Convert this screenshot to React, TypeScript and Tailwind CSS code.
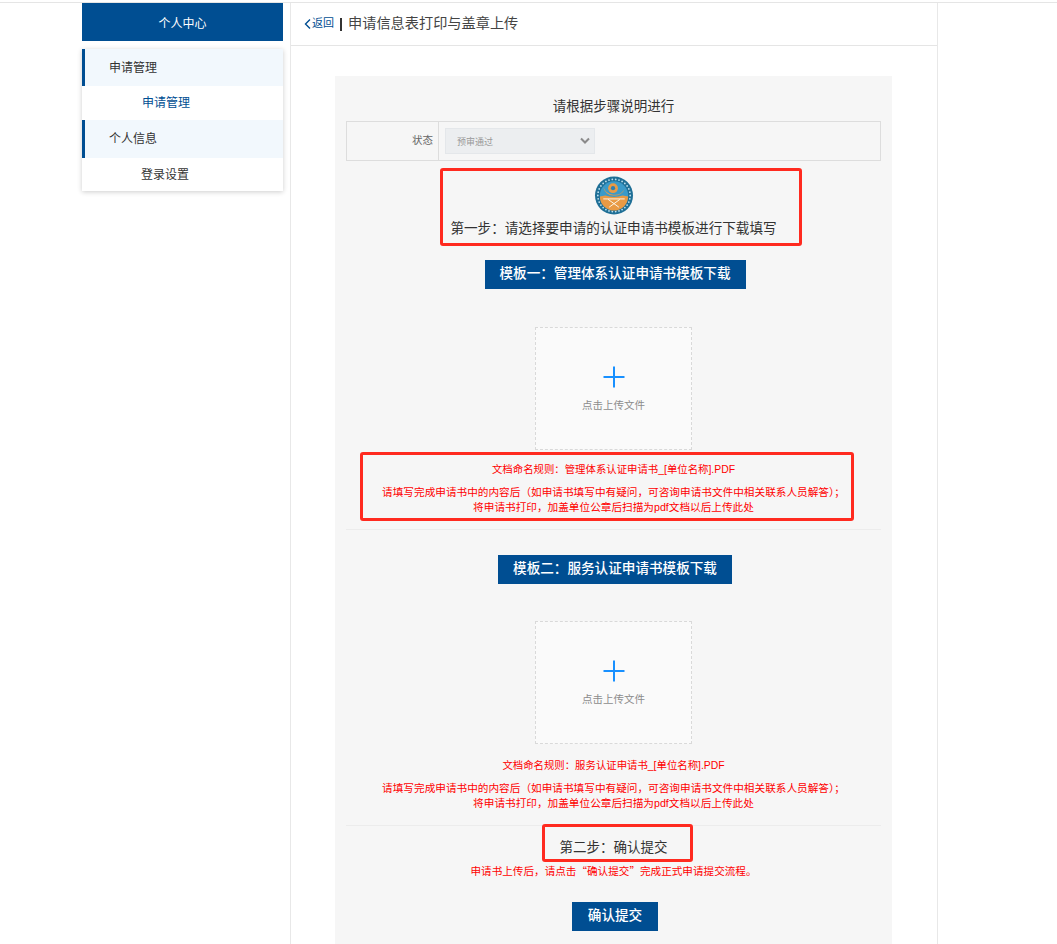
const FONT = "font-['Liberation_Sans','Noto_Sans_CJK_SC',sans-serif]";

function Logo() {
  const dots = Array.from({ length: 30 }, (_, i) => {
    const a = (i / 30) * Math.PI * 2;
    return { x: 20 + Math.cos(a) * 16.6, y: 20 + Math.sin(a) * 16.6 };
  });

  return (
    <svg width="40" height="39" viewBox="0 0 40 40" className="block">
      <circle cx="20" cy="20" r="19.5" fill="#1f6f96" />
      {dots.map((d, i) => (
        <circle key={i} cx={d.x} cy={d.y} r="0.9" fill="#bfe0ef" />
      ))}
      <circle cx="20" cy="20" r="14.5" fill="#3a9ac9" />
      <path d="M5.5 21 A14.5 14.5 0 0 0 34.5 21 L29 20 Q20 23 11 20 Z" fill="#e99a45" />
      <path d="M9 11 A12 12 0 0 0 31 13 A10.5 10.5 0 0 1 20 20 A10 10 0 0 1 9 11 Z" fill="#e99a45" />
      <circle cx="19" cy="12.5" r="5" fill="#e99a45" />
      <circle cx="19" cy="12.5" r="2.2" fill="#2f7fb0" />
      <path d="M9 23.5 H31 M14 24 L25 32 M26 24 L15 32" stroke="#fbf6ea" strokeWidth="1" fill="none" />
    </svg>
  );
}

function PlusUpload() {
  return (
    <div className="mx-auto flex h-[123px] w-[157px] flex-col items-center border border-dashed border-[#d9d9d9] bg-[#fafafa]">
      <svg width="22" height="22" viewBox="0 0 22 22" className="ml-px mt-[38px] block">
        <path d="M11 0.5 V21.5 M0.5 11 H21.5" stroke="#1890ff" strokeWidth="2" fill="none" />
      </svg>
      <p className="mt-[9px] text-[10.5px] leading-4 text-[#8c8c8c]">点击上传文件</p>
    </div>
  );
}

function Notes({ rule }: { rule: string }) {
  return (
    <div className="text-center text-[10.65px] text-[#ff0000]">
      <p className="text-[10.4px] leading-[15px]">{rule}</p>
      <p className="mt-[8px] leading-[15px]">
        请填写完成申请书中的内容后（如申请书填写中有疑问，可咨询申请书文件中相关联系人员解答）；
      </p>
      <p className="leading-[15px]">将申请书打印，加盖单位公章后扫描为pdf文档以后上传此处</p>
    </div>
  );
}

function DownloadButton({ children, className }: { children: string; className: string }) {
  return (
    <div className="flex justify-center pl-[3px]">
      <div className={`flex h-[29px] items-center justify-center bg-[#004e92] text-[13.6px] font-medium text-white ${className}`}>
        {children}
      </div>
    </div>
  );
}

function RedBox({ className }: { className: string }) {
  return (
    <div className={`pointer-events-none absolute rounded-[3px] border-[3px] border-[#ff2a1f] ${className}`} />
  );
}

export default function App() {
  return (
    <div className={`${FONT} h-[944px] overflow-hidden bg-white pt-[2px] text-[#333]`}>
      <div className="h-px bg-[#e5e5e5]" />
      <div className="ml-[82px] flex w-[856px] items-start">
        <aside className="w-[201px] shrink-0">
          <div className="flex h-[38px] items-center justify-center bg-[#004e92] pt-[3px] text-xs text-white">
            个人中心
          </div>
          <nav className="mt-[8px] bg-white text-xs shadow-[0_1px_5px_rgba(0,0,0,0.2)]">
            <div className="flex h-[37px] items-center border-l-[3px] border-[#004e92] bg-[#f2f8fd] pl-[24px]">申请管理</div>
            <div className="flex h-[34px] items-center pl-[60px] text-[#004e92]">申请管理</div>
            <div className="flex h-[38px] items-center border-l-[3px] border-[#004e92] bg-[#f2f8fd] pl-[24px]">个人信息</div>
            <div className="flex h-[33px] items-center pl-[59px]">登录设置</div>
          </nav>
        </aside>

        <main className="relative ml-[7px] h-[941px] w-[648px] border-x border-[#e8e8e8]">
          <header className="flex h-[43px] items-center border-b border-[#e5e5e5] pl-[13px]">
            <svg width="7" height="10" viewBox="0 0 7 10" className="block">
              <path d="M6 0.5 L1.5 5 L6 9.5" stroke="#004e92" strokeWidth="1.4" fill="none" />
            </svg>
            <span className="mb-[2px] ml-px text-[11px] text-[#004e92]">返回</span>
            <span className="ml-[6px] h-[13px] w-[2px] bg-[#333]" />
            <span className="ml-[6px] text-[14.2px] text-[#444]">申请信息表打印与盖章上传</span>
          </header>

          <section className="ml-[44px] mt-[30px] h-[868px] w-[557px] bg-[#f6f6f6] px-[11px]">
            <h2 className="pt-[22px] text-center text-[13.5px] leading-[18px]">请根据步骤说明进行</h2>

            <div className="mt-[5px] flex h-[40px] border border-[#dddddd]">
              <div className="flex w-[92px] items-center justify-end border-r border-[#dddddd] pr-[5px] text-[10.5px] text-[#666]">
                状态
              </div>
              <div className="flex items-center pl-[6px]">
                <div className="flex h-[26px] w-[150px] items-center justify-between border border-[#e4e7ea] bg-[#eceef0] pl-[11px] pr-[3px] text-[9px] text-[#999]">
                  <span className="pt-[3px]">预审通过</span>
                  <svg width="12" height="8" viewBox="0 0 12 8" className="block">
                    <path d="M2 1.5 L6 5.5 L10 1.5" stroke="#8a8a8a" strokeWidth="2" fill="none" />
                  </svg>
                </div>
              </div>
            </div>

            <div className="mt-[15px] flex justify-center">
              <Logo />
            </div>
            <p className="mt-[5px] text-center text-[13.6px] leading-[18px]">第一步：请选择要申请的认证申请书模板进行下载填写</p>

            <div className="mt-[22px]">
              <DownloadButton className="w-[261px]">模板一：管理体系认证申请书模板下载</DownloadButton>
            </div>

            <div className="mt-[38px]">
              <PlusUpload />
            </div>
            <div className="mt-[12px]">
              <Notes rule="文档命名规则：管理体系认证申请书_[单位名称].PDF" />
            </div>

            <div className="mt-[14px] h-px bg-[#ececec]" />

            <div className="mt-[25px]">
              <DownloadButton className="w-[234px]">模板二：服务认证申请书模板下载</DownloadButton>
            </div>

            <div className="mt-[37px]">
              <PlusUpload />
            </div>
            <div className="mt-[14px]">
              <Notes rule="文档命名规则：服务认证申请书_[单位名称].PDF" />
            </div>

            <div className="mt-[14px] h-px bg-[#ececec]" />

            <p className="mt-[13px] text-center text-[13.5px] leading-[18px]">第二步：确认提交</p>
            <p className="mt-[6px] text-center text-[10.6px] leading-[15px] text-[#ff0000]">
              申请书上传后，请点击<span className="font-['Noto_Sans_CJK_SC']" lang="zh-CN">“</span>确认提交<span className="font-['Noto_Sans_CJK_SC']" lang="zh-CN">”</span>完成正式申请提交流程。
            </p>
            <div className="mt-[23px] flex justify-center pl-[3px]">
              <div className="flex h-[29px] w-[86px] items-center justify-center bg-[#004e92] text-[13.6px] font-medium text-white">
                确认提交
              </div>
            </div>
          </section>

          <RedBox className="left-[149px] top-[165px] h-[78px] w-[362px]" />
          <RedBox className="left-[69px] top-[449px] h-[69px] w-[494px]" />
          <RedBox className="left-[251px] top-[821px] h-[38px] w-[151px]" />
        </main>
      </div>
    </div>
  );
}
